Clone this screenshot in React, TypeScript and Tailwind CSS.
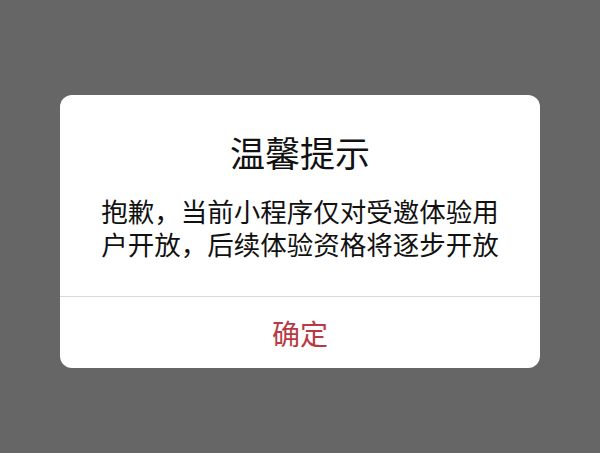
export default function App() {
  return (
    <div
      className="w-[600px] h-[453px] bg-[#666666] flex justify-center pt-[95px]"
      style={{ fontFamily: '"Noto Sans CJK SC", "Noto Sans", sans-serif' }}
    >
      <div className="w-[480px] h-[273px] bg-white rounded-[12px] flex flex-col overflow-hidden">
        <div className="flex flex-col items-center pt-[37px] pb-[36px] border-b border-[#d9d9d9]">
          <div className="text-[35px] leading-[40px] text-[#111111]">温馨提示</div>
          <div className="mt-[22px] text-[26.5px] leading-[33px] text-[#111111] text-center w-[400px]">
            抱歉，当前小程序仅对受邀体验用户开放，后续体验资格将逐步开放
          </div>
        </div>
        <button className="flex-1 flex items-center justify-center text-[28px] text-[#b83a45]">
          确定
        </button>
      </div>
    </div>
  );
}
